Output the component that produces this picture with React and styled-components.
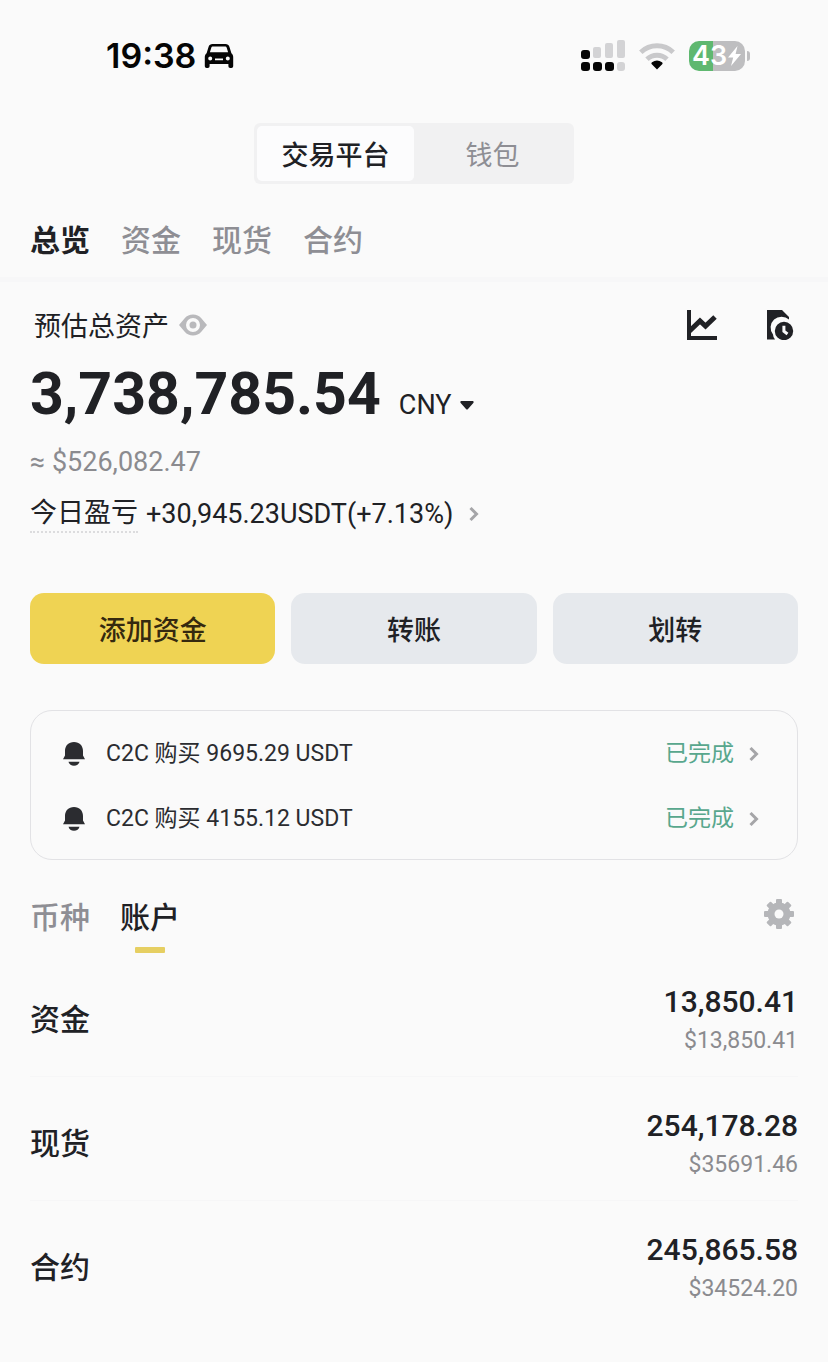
import React, { useState } from 'react'
import styled, { createGlobalStyle } from 'styled-components'

const cjk = "'Noto Sans CJK SC', Roboto, sans-serif"

const GlobalStyle = createGlobalStyle`
  * {
    box-sizing: border-box;
  }

  body {
    margin: 0;
    background-color: #fafafa;
    color: #202125;
    font-family: Roboto, 'Noto Sans CJK SC', sans-serif;
  }

  button,
  select {
    margin: 0;
    padding: 0;
    border: 0;
    background: none;
    color: inherit;
    font: inherit;
    cursor: pointer;
  }

  svg {
    display: block;
    flex-shrink: 0;
  }
`

const Page = styled.main`
  padding: 0 30px;
`

const StatusBar = styled.header`
  display: flex;
  justify-content: space-between;
  align-items: center;
  padding: 37px 48px 49px 76px;
  color: #050505;
`

const Clock = styled.div`
  display: flex;
  align-items: center;
  gap: 8px;
  font-family: Inter, sans-serif;
  font-size: 34px;
  font-weight: 600;
  line-height: 37px;
`

const Signals = styled.div`
  display: flex;
  align-items: center;
  gap: 14px;
`

const Battery = styled.div`
  display: flex;
  align-items: center;
  gap: 2px;
`

const BatteryBody = styled.div`
  display: flex;
  align-items: center;
  justify-content: center;
  width: 56px;
  height: 30px;
  border-radius: 10px;
  background: linear-gradient(90deg, #5fb870 43%, #bebec0 43%);
  color: #fff;
  font-family: Inter, sans-serif;
  font-size: 27px;
  font-weight: 600;
  line-height: 30px;
`

const BatteryCap = styled.div`
  width: 3px;
  height: 10px;
  border-radius: 0 3px 3px 0;
  background-color: #bebec0;
`

const Switch = styled.div`
  display: flex;
  width: 320px;
  margin: 0 auto;
  padding: 3px;
  border-radius: 6px;
  background-color: #f1f1f2;
`

const SwitchButton = styled.button`
  flex: 1;
  border-radius: 5px;
  background-color: ${({ $active }) => ($active ? '#fcfcfd' : 'transparent')};
  color: ${({ $active }) => ($active ? '#202125' : '#8e8e94')};
  font-family: ${cjk};
  font-size: 27px;
  font-weight: ${({ $active }) => ($active ? 500 : 400)};
  line-height: 55px;
`

const Tabs = styled.nav`
  display: flex;
  gap: 31px;
  margin: 34px -30px 0;
  padding: 0 30px 19px;
  border-bottom: 5px solid #f7f7f8;
`

const Tab = styled.button`
  color: ${({ $active }) => ($active ? '#202125' : '#8e8e94')};
  font-family: ${cjk};
  font-size: 30px;
  font-weight: ${({ $active }) => ($active ? 700 : 500)};
  line-height: 40px;
`

const AssetHead = styled.div`
  display: flex;
  justify-content: space-between;
  align-items: center;
  margin-top: 25px;
  padding: 0 4px;
`

const AssetLabel = styled.div`
  display: flex;
  align-items: center;
  gap: 10px;
  font-family: ${cjk};
  font-size: 27px;
  line-height: 36px;
`

const Tools = styled.div`
  display: flex;
  gap: 49px;
`

const Balance = styled.div`
  display: flex;
  align-items: baseline;
  gap: 18px;
  margin-top: 19px;
  line-height: 64px;
`

const Amount = styled.strong`
  font-size: 59px;
  font-weight: 700;
`

const Currency = styled.label`
  display: flex;
  align-items: center;
  gap: 8px;
  font-size: 27px;
  line-height: 36px;

  select {
    appearance: none;
  }
`

const Approx = styled.div`
  margin-top: 18px;
  color: #8b8b8f;
  font-size: 27px;
  line-height: 36px;
`

const Pnl = styled.a`
  display: flex;
  align-items: center;
  margin-top: 15px;
  color: inherit;
  font-size: 27px;
  line-height: 36px;
  text-decoration: none;

  svg {
    margin-left: 16px;
  }
`

const PnlLabel = styled.span`
  margin-right: 8px;
  border-bottom: 2px dotted #dcdcde;
`

const Actions = styled.div`
  display: grid;
  grid-template-columns: repeat(3, 1fr);
  gap: 16px;
  margin-top: 60px;
`

const ActionButton = styled.button`
  border-radius: 14px;
  background-color: ${({ $primary }) => ($primary ? '#efd353' : '#e6e9ed')};
  color: ${({ $primary }) => ($primary ? '#35290f' : '#202125')};
  font-family: ${cjk};
  font-size: 27px;
  font-weight: 500;
  line-height: 71px;
`

const Notices = styled.div`
  margin-top: 46px;
  padding: 10px 38px 8px 32px;
  border: 1px solid #e2e2e5;
  border-radius: 22px;
`

const Notice = styled.a`
  display: flex;
  align-items: center;
  color: #2b2c30;
  font-size: 23px;
  line-height: 65px;
  text-decoration: none;
`

const NoticeText = styled.span`
  flex: 1;
  margin-left: 21px;
`

const NoticeState = styled.span`
  margin-right: 15px;
  color: #58a78d;
`

const ListHead = styled.div`
  display: flex;
  justify-content: space-between;
  align-items: flex-start;
  margin-top: 35px;
  padding-right: 4px;
`

const ListTabs = styled.div`
  display: flex;
  gap: 30px;
`

const ListTab = styled(Tab)`
  display: flex;
  flex-direction: column;
  align-items: center;
  font-weight: 500;

  &::after {
    content: '';
    width: 30px;
    height: 6px;
    margin-top: 12px;
    border-radius: 1px;
    background-color: ${({ $active }) => ($active ? '#e6cf62' : 'transparent')};
  }
`

const Settings = styled.button`
  padding-top: 4px;
`

const Accounts = styled.ul`
  margin: 0;
  padding: 0;
  list-style: none;
`

const Account = styled.li`
  display: flex;
  justify-content: space-between;
  align-items: flex-start;
  padding: 29px 0 16px;
  font-size: 30px;
  font-weight: 500;

  & + & {
    border-top: 1px solid #f6f6f7;
  }
`

const AccountName = styled.span`
  font-family: ${cjk};
  line-height: 70px;
`

const AccountFigures = styled.div`
  text-align: right;
`

const AccountValue = styled.div`
  line-height: 40px;
`

const AccountUsd = styled.div`
  color: #8b8b8f;
  font-size: 23px;
  font-weight: 400;
  line-height: 38px;
`

const CarIcon = () => (
  <svg width='30' height='26' viewBox='0 0 30 26'>
    <path
      fill='currentColor'
      fillRule='evenodd'
      d='M8.5 1h13c2 0 3.300 1 3.900 2.800l2 6.400c1.200 1 1.800 2.300 1.800 4v9a1.800 1.800 0 0 1-1.800 1.800h-1.200a1.800 1.800 0 0 1-1.800-1.800V21H5.600v2.200A1.800 1.800 0 0 1 3.800 25H2.600a1.800 1.800 0 0 1-1.800-1.800v-9c0-1.700.6-3 1.800-4l2-6.400C5.200 2 6.500 1 8.500 1Zm.6 2.600c-1 0-1.600.4-1.900 1.300L5.900 9.200h18.200l-1.300-4.300c-.3-.9-.9-1.300-1.900-1.300ZM6.200 13.400a2 2 0 1 0 0 4 2 2 0 0 0 0-4Zm17.600 0a2 2 0 1 0 0 4 2 2 0 0 0 0-4ZM11 15.600v1.600h8v-1.600Z'
    />
  </svg>
)

const SignalIcon = () => (
  <svg width='44' height='32' viewBox='0 0 44 32'>
    <g fill='#d3d3d5'>
      <rect x='12' y='7' width='8' height='11' rx='2' />
      <rect x='24' y='3' width='8' height='15' rx='2' />
      <rect x='36' y='0' width='8' height='18' rx='2' />
      <rect x='36' y='22' width='8' height='9' rx='3' />
    </g>
    <g fill='currentColor'>
      <rect x='0' y='10' width='9' height='9' rx='3' />
      <rect x='0' y='22' width='9' height='9' rx='3' />
      <rect x='12' y='22' width='9' height='9' rx='3' />
      <rect x='24' y='22' width='9' height='9' rx='3' />
    </g>
  </svg>
)

const WifiIcon = () => (
  <svg width='36' height='28' viewBox='0 0 36 28'>
    <g fill='none' stroke='#c9c9cb' strokeWidth='5'>
      <path d='M1.800 10.200a23.500 23.500 0 0 1 32.400 0' />
      <path d='M8 17.200a14.500 14.500 0 0 1 20 0' />
    </g>
    <path fill='currentColor' d='M18 27.500l-5.200-5.300c-.6-.7-.5-1.400.2-1.900a8.500 8.500 0 0 1 10 0c.7.5.8 1.200.2 1.900Z' />
  </svg>
)

const BoltIcon = () => (
  <svg width='15' height='20' viewBox='0 0 15 20'>
    <path fill='currentColor' d='M10.500 0L1 11.500h5.200L4 20l10-12H8.600Z' />
  </svg>
)

const EyeIcon = () => (
  <svg width='28' height='22' viewBox='0 0 28 22'>
    <path
      fill='#b9b9bc'
      fillRule='evenodd'
      d='M14 .5c3.500 0 6 1.200 8.300 3.800L28 11l-5.700 6.700c-2.300 2.600-4.800 3.800-8.300 3.800s-6-1.200-8.300-3.800L0 11l5.700-6.700C8 1.700 10.500.5 14 .5Zm0 3.500a7 7 0 1 0 0 14 7 7 0 0 0 0-14Z'
    />
    <circle cx='14' cy='11' r='3.500' fill='#b9b9bc' />
  </svg>
)

const ChartIcon = () => (
  <svg width='30' height='30' viewBox='0 0 30 30'>
    <g fill='none' stroke='currentColor'>
      <path strokeWidth='4' d='M2 0v28h28' />
      <path strokeWidth='5' d='M2 21.500l11-10.500 5.500 5L28 7' />
    </g>
  </svg>
)

const HistoryIcon = () => (
  <svg width='28' height='30' viewBox='0 0 28 30'>
    <path fill='currentColor' d='M1 0h15l7 7v2.500A11 11 0 0 0 7 24.500Q7 27 9 29.500H1Z' />
    <path
      fill='currentColor'
      fillRule='evenodd'
      d='M18 11.800a9.200 9.200 0 1 1 0 18.400 9.200 9.200 0 0 1 0-18.400Zm-1.600 4v6.200l4.200 3.200 1.800-2.400-3-2.200v-4.800Z'
    />
  </svg>
)

const CaretIcon = () => (
  <svg width='14' height='9' viewBox='0 0 14 9'>
    <path fill='currentColor' d='M1.500 0h11c1 0 1.600 1 .8 1.900L8 8c-.6.700-1.400.7-2 0L.7 1.900C-.1 1 .5 0 1.500 0Z' />
  </svg>
)

const ChevronIcon = () => (
  <svg width='10' height='16' viewBox='0 0 10 16'>
    <path fill='none' stroke='#a5a5a8' strokeWidth='3' d='M1.500 2l6 6-6 6' />
  </svg>
)

const BellIcon = () => (
  <svg width='22' height='24' viewBox='0 0 22 24'>
    <path fill='currentColor' d='M11 0c5.500 0 9 3.800 9 9v4.500l2 3.700H0l2-3.700V9c0-5.200 3.500-9 9-9ZM5.500 19.800h11c-.6 2.400-2.700 4-5.500 4s-4.900-1.600-5.500-4Z' />
  </svg>
)

const GearIcon = () => (
  <svg width='30' height='30' viewBox='0 0 30 30'>
    <g fill='#b5b6b9'>
      {[0, 45, 90, 135].map(angle => (
        <rect
          key={angle}
          x='12'
          y='0'
          width='6'
          height='30'
          rx='1'
          transform={`rotate(${angle} 15 15)`}
        />
      ))}
      <circle cx='15' cy='15' r='11.500' />
    </g>
    <circle cx='15' cy='15' r='4.500' fill='#fafafa' />
  </svg>
)

const notices = [
  { id: 1, text: 'C2C 购买 9695.29 USDT', state: '已完成' },
  { id: 2, text: 'C2C 购买 4155.12 USDT', state: '已完成' },
]

const accounts = [
  { name: '资金', value: '13,850.41', usd: '$13,850.41' },
  { name: '现货', value: '254,178.28', usd: '$35691.46' },
  { name: '合约', value: '245,865.58', usd: '$34524.20' },
]

const App = () => {
  const [platform, setPlatform] = useState('交易平台')
  const [tab, setTab] = useState('总览')
  const [listTab, setListTab] = useState('账户')

  return (
    <>
      <GlobalStyle />
      <Page>
        <StatusBar>
          <Clock>
            19:38
            <CarIcon />
          </Clock>
          <Signals>
            <SignalIcon />
            <WifiIcon />
            <Battery>
              <BatteryBody>
                43
                <BoltIcon />
              </BatteryBody>
              <BatteryCap />
            </Battery>
          </Signals>
        </StatusBar>

        <Switch>
          {['交易平台', '钱包'].map(name => (
            <SwitchButton
              key={name}
              $active={name === platform}
              onClick={() => setPlatform(name)}
            >
              {name}
            </SwitchButton>
          ))}
        </Switch>

        <Tabs>
          {['总览', '资金', '现货', '合约'].map(name => (
            <Tab key={name} $active={name === tab} onClick={() => setTab(name)}>
              {name}
            </Tab>
          ))}
        </Tabs>

        <AssetHead>
          <AssetLabel>
            预估总资产
            <button aria-label='隐藏资产'>
              <EyeIcon />
            </button>
          </AssetLabel>
          <Tools>
            <button aria-label='资产走势'>
              <ChartIcon />
            </button>
            <button aria-label='历史记录'>
              <HistoryIcon />
            </button>
          </Tools>
        </AssetHead>

        <Balance>
          <Amount>3,738,785.54</Amount>
          <Currency>
            <select aria-label='货币'>
              <option>CNY</option>
            </select>
            <CaretIcon />
          </Currency>
        </Balance>
        <Approx>≈ $526,082.47</Approx>
        <Pnl href='#pnl'>
          <PnlLabel>今日盈亏</PnlLabel>
          +30,945.23USDT(+7.13%)
          <ChevronIcon />
        </Pnl>

        <Actions>
          <ActionButton $primary>添加资金</ActionButton>
          <ActionButton>转账</ActionButton>
          <ActionButton>划转</ActionButton>
        </Actions>

        <Notices>
          {notices.map(({ id, text, state }) => (
            <Notice key={id} href='#orders'>
              <BellIcon />
              <NoticeText>{text}</NoticeText>
              <NoticeState>{state}</NoticeState>
              <ChevronIcon />
            </Notice>
          ))}
        </Notices>

        <ListHead>
          <ListTabs>
            {['币种', '账户'].map(name => (
              <ListTab
                key={name}
                $active={name === listTab}
                onClick={() => setListTab(name)}
              >
                {name}
              </ListTab>
            ))}
          </ListTabs>
          <Settings aria-label='设置'>
            <GearIcon />
          </Settings>
        </ListHead>

        <Accounts>
          {accounts.map(({ name, value, usd }) => (
            <Account key={name}>
              <AccountName>{name}</AccountName>
              <AccountFigures>
                <AccountValue>{value}</AccountValue>
                <AccountUsd>{usd}</AccountUsd>
              </AccountFigures>
            </Account>
          ))}
        </Accounts>
      </Page>
    </>
  )
}

export default App
